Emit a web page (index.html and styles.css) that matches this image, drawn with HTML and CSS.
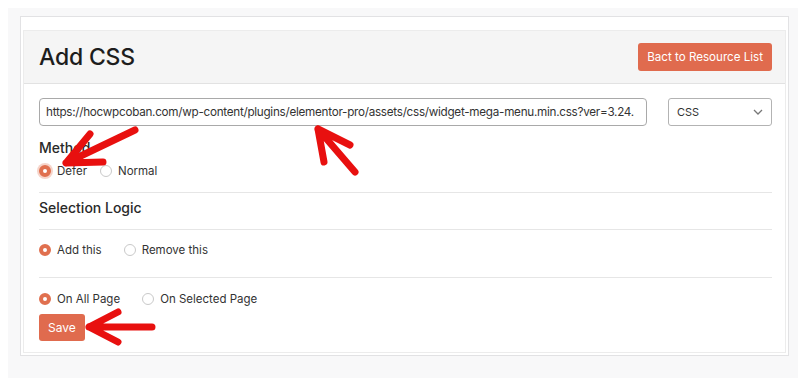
FILE: index.html
```html
<!DOCTYPE html>
<html lang="en">
<head>
<meta charset="UTF-8">
<meta name="viewport" content="width=device-width, initial-scale=1.0">
<title>Add CSS</title>
<link rel="stylesheet" href="styles.css">
</head>
<body>

<div class="page">
    <div class="card">
        <div class="inner">
            <div class="head">
                <h1>Add CSS</h1>
                <button class="btn">Bact to Resource List</button>
            </div>
            <div class="body">
                <div class="url-row">
                    <input type="text" class="url" value="https://hocwpcoban.com/wp-content/plugins/elementor-pro/assets/css/widget-mega-menu.min.css?ver=3.24.">
                    <div class="select">
                        <span>CSS</span>
                        <svg width="10" height="6" viewBox="0 0 10 6"><path d="M1 1l4 4 4-4" fill="none" stroke="#777" stroke-width="1.3"/></svg>
                    </div>
                </div>

                <div class="label first">Method</div>
                <div class="radios">
                    <label class="radio"><span class="dot on focus"></span>Defer</label>
                    <label class="radio"><span class="dot"></span>Normal</label>
                </div>
                <div class="line line-a"></div>

                <div class="label">Selection Logic</div>
                <div class="line line-b"></div>
                <div class="radios wide row-b">
                    <label class="radio"><span class="dot on"></span>Add this</label>
                    <label class="radio"><span class="dot"></span>Remove this</label>
                </div>
                <div class="line line-c"></div>

                <div class="radios wide row-c">
                    <label class="radio"><span class="dot on"></span>On All Page</label>
                    <label class="radio"><span class="dot"></span>On Selected Page</label>
                </div>
                <button class="btn save">Save</button>
            </div>
        </div>
    </div>
</div>

<!-- red annotation arrows drawn over the screenshot -->
<svg class="marks" width="806" height="386" viewBox="0 0 806 386">
    <g fill="none" stroke="#e8100f" stroke-width="7" stroke-linecap="round" stroke-linejoin="round">
        <path d="M135 130 L66 163 M66 163 L90 134 M66 163 L103 162"/>
        <path d="M355 172 L318 129 M318 129 L350 145 M318 129 L324 162"/>
        <path d="M152 327 L89 327 M89 327 L118 312 M89 327 L118 342"/>
    </g>
</svg>

</body>
</html>
```

FILE: styles.css
```css
body {
    margin: 0;
    padding: 0;
    background: #fff;
    font-family: Inter, "Liberation Sans", Arial, sans-serif;
    color: #2a2a2a;
}
.page {
    margin: 8px;
    padding: 8px 9px 22px 12px;
    background: #f8f8f9;
    width: 769px;
}
.card {
    background: #fff;
    border: 1px solid #e2e2e4;
    padding: 13px 2px 2px 2px;
}
.inner {
    border: 1px solid #ececec;
}
.head {
    height: 52px;
    background: #f5f5f5;
    border-bottom: 1px solid #e2e2e2;
    display: flex;
    align-items: center;
    justify-content: space-between;
    padding: 0 13px 0 15px;
}
h1 {
    margin: 0;
    font-size: 23px;
    font-weight: 500;
    color: #1d1d1d;
    letter-spacing: -0.2px;
}
.btn {
    background: #e06b4e;
    color: #fff;
    border: none;
    border-radius: 3px;
    font-family: inherit;
    font-size: 11.6px;
    height: 28px;
    padding: 0 9px;
    cursor: pointer;
}
.body {
    padding: 14px 13px 11px 15px;
}
.url-row {
    display: flex;
    gap: 21px;
}
.url {
    flex: 1;
    height: 28px;
    box-sizing: border-box;
    border: 1px solid #a9a9a9;
    border-radius: 4px;
    padding: 0 6px;
    font-family: inherit;
    font-size: 11.7px;
    color: #333;
    letter-spacing: -0.27px;
}
.select {
    width: 104px;
    height: 28px;
    box-sizing: border-box;
    border: 1px solid #b3b3b3;
    border-radius: 3px;
    display: flex;
    align-items: center;
    justify-content: space-between;
    padding: 0 8px 0 8px;
    font-size: 11px;
    color: #333;
}
.label {
    font-size: 14px;
    line-height: 18px;
    margin-top: 6px;
    font-weight: 500;
    color: #2a2a2a;
}
.label.first {
    margin-top: 13px;
}
.radios {
    display: flex;
    gap: 13px;
    margin-top: 5px;
    height: 18px;
    align-items: center;
}
.radios.wide {
    gap: 22px;
}
.row-b {
    margin-top: 11px;
}
.row-c {
    margin-top: 12px;
}
.radio {
    display: flex;
    align-items: center;
    gap: 6px;
    font-size: 11.5px;
    color: #333;
}
.dot {
    width: 12px;
    height: 12px;
    box-sizing: border-box;
    border-radius: 50%;
    border: 1px solid #c9c9c9;
    background: #fff;
}
.dot.on {
    border: 4px solid #e0704f;
}
.dot.focus {
    box-shadow: 0 0 0 2px rgba(224, 112, 79, 0.3);
}
.line {
    height: 1px;
    background: #e6e6e6;
}
.line-a {
    margin-top: 12px;
}
.line-b {
    margin-top: 12px;
}
.line-c {
    margin-top: 18px;
}
.save {
    display: block;
    margin-top: 6px;
    height: 27px;
    padding: 0 9px;
    font-size: 12px;
}
.marks {
    position: absolute;
    top: 0;
    left: 0;
    pointer-events: none;
}
```
